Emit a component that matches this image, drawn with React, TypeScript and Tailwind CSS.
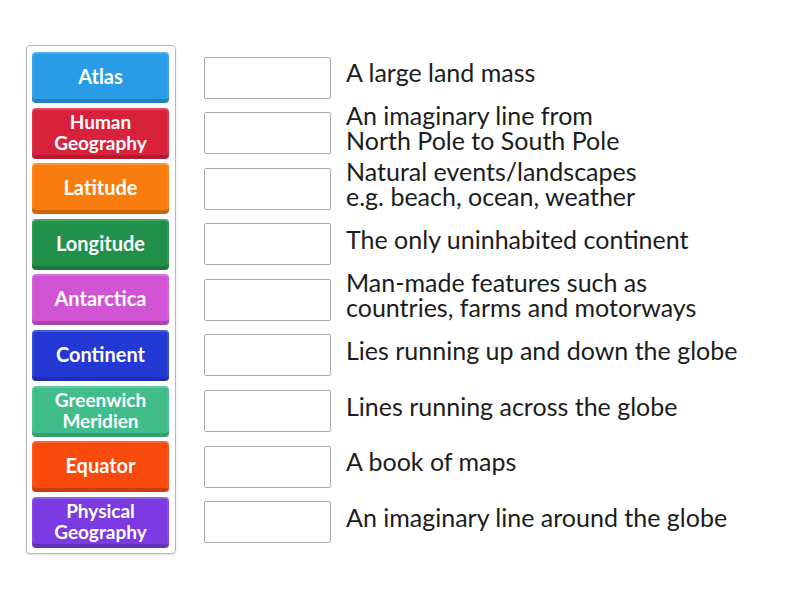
import React from "react";

const tiles: { label: string[]; cls: string }[] = [
  { label: ["Atlas"], cls: "bg-[#2a9be6]" },
  { label: ["Human", "Geography"], cls: "bg-[#d8213b]" },
  { label: ["Latitude"], cls: "bg-[#fb7c0e]" },
  { label: ["Longitude"], cls: "bg-[#21904a]" },
  { label: ["Antarctica"], cls: "bg-[#d054d4]" },
  { label: ["Continent"], cls: "bg-[#2439d3]" },
  { label: ["Greenwich", "Meridien"], cls: "bg-[#40bd8b]" },
  { label: ["Equator"], cls: "bg-[#f84a0c]" },
  { label: ["Physical", "Geography"], cls: "bg-[#7b3ae2]" },
];

const defs: string[][] = [
  ["A large land mass"],
  ["An imaginary line from", "North Pole to South Pole"],
  ["Natural events/landscapes", "e.g. beach, ocean, weather"],
  ["The only uninhabited continent"],
  ["Man-made features such as", "countries, farms and motorways"],
  ["Lies running up and down the globe"],
  ["Lines running across the globe"],
  ["A book of maps"],
  ["An imaginary line around the globe"],
];

export default function App() {
  return (
    <div
      className="w-[800px] h-[600px] bg-white flex items-start pl-[26px] pt-[45px]"
      style={{ fontFamily: "Lato, 'Open Sans', sans-serif" }}
    >
      <div className="w-[150px] h-[509px] border border-[#b8b8b8] rounded-[4px] pl-[5px] pr-[6px] pt-[6px] flex flex-col gap-[4.6px] shadow-[0_1px_2px_rgba(0,0,0,0.15)]">
        {tiles.map((t, i) => (
          <div
            key={i}
            className={`${t.cls} h-[51px] w-[137px] shrink-0 rounded-[4px] flex flex-col items-center justify-center text-white font-bold pb-[3px] shadow-[inset_0_-4px_0_rgba(0,0,0,0.18),inset_0_2px_0_rgba(255,255,255,0.18),inset_2px_0_0_rgba(255,255,255,0.08),inset_-2px_0_0_rgba(255,255,255,0.08)] ${
              t.label.length > 1 ? "text-[19px] leading-[21px]" : "text-[20px] leading-[24px]"
            }`}
          >
            {t.label.map((l, j) => (
              <div key={j} className="whitespace-nowrap">{l}</div>
            ))}
          </div>
        ))}
      </div>
      <div className="flex flex-col gap-[4.6px] pt-[7px] ml-[28px]">
        {defs.map((d, i) => (
          <div key={i} className="h-[51px] flex items-center shrink-0">
            <div className="w-[127px] h-[42px] border border-[#a9a9a9] rounded-[2px] bg-white shrink-0" />
            <div className="ml-[15px] text-[25px] leading-[25px] text-[#1c1c1c] mb-[10px]">
              {d.map((l, j) => (
                <div key={j} className="whitespace-nowrap">{l}</div>
              ))}
            </div>
          </div>
        ))}
      </div>
    </div>
  );
}
